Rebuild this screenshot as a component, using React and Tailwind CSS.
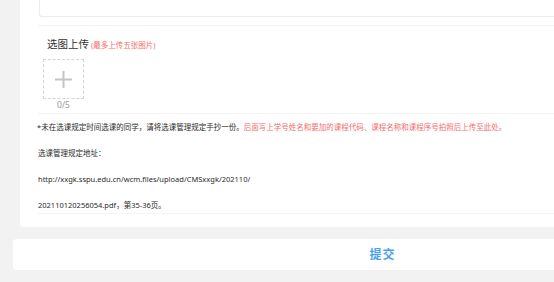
const textFont = { fontFamily: '"Noto Sans", "Noto Sans CJK SC", sans-serif' };

const lines = [
  "选课管理规定地址：",
  "http://xxgk.sspu.edu.cn/wcm.files/upload/CMSxxgk/202110/",
  "202110120256054.pdf，第35-36页。",
];

export default function App() {
  return (
    <div className="h-[282px] w-full overflow-hidden bg-[#f2f2f2]" style={textFont}>
      <div className="flex w-[760px] flex-col">
        {/* form card, top part scrolled off */}
        <div className="ml-[20px] rounded-b-[4px] bg-white pb-[13px] pl-[18px]">
          <div className="ml-[1px] h-[17px] rounded-bl-[3px] border-b border-l border-[#ececec]" />
          <div className="mt-[8px] border-t border-[#f4f4f4]">
            <div className="flex items-baseline pl-[9px] pt-[11px]">
              <span className="text-[10.5px] leading-[14px] text-[#303133]">选图上传</span>
              <span className="ml-[2px] text-[7.5px] text-[#f56c6c]">(最多上传五张图片)</span>
            </div>
            <div className="mt-[8px] flex w-[41px] flex-col items-center pl-[5px] box-content">
              <div className="flex h-[40px] w-[41px] items-center justify-center border border-dashed border-[#d4d4d4]">
                <svg width="17" height="17" viewBox="0 0 17 17">
                  <path d="M8.5 0v17M0 8.5h17" stroke="#c4c4c4" strokeWidth="2" />
                </svg>
              </div>
              <span className="text-[8.5px] leading-[11px] text-[#999]">0/5</span>
            </div>
          </div>
          <div className="mt-[3px] flex flex-col gap-[14px] border-t border-[#f4f4f4] pt-[7px] pb-[2px] text-[7.5px] leading-[12px] text-[#2b2b2b]">
            <p className="-ml-[1px] whitespace-nowrap">
              *未在选课规定时间选课的同学，请将选课管理规定手抄一份。
              <span className="text-[#f56c6c]">后面写上学号姓名和要加的课程代码、课程名称和课程序号拍照后上传至此处。</span>
            </p>
            {lines.map((t) => (
              <p key={t} className="whitespace-nowrap">{t}</p>
            ))}
          </div>
          <div className="border-t border-[#f4f4f4]" />
        </div>

        {/* submit bar */}
        <div className="ml-[13px] mt-[12px] flex h-[31px] w-[740px] items-center justify-center rounded-[4px] bg-white">
          <span className="-ml-[1px] text-[12px] font-bold tracking-[1px] text-[#4a9ff5]">提交</span>
        </div>
      </div>
    </div>
  );
}
